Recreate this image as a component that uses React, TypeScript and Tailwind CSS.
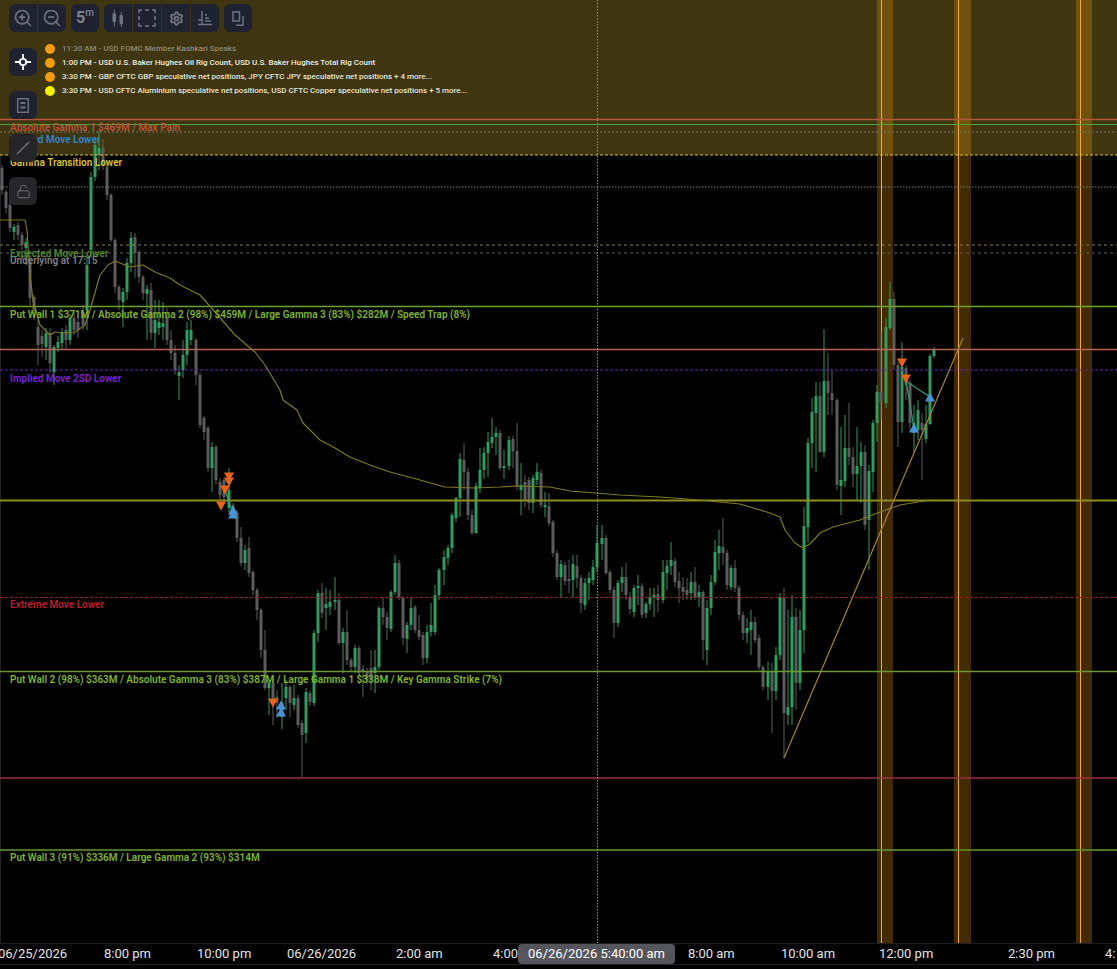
import React from 'react';
import { ZoomIn, ZoomOut, Settings, LockOpen } from 'lucide-react';

// x, wick top, body top, body bottom, wick bottom, green?
const CANDLES: number[][] = [
  [2,165,168,190,195,0],[6,190,192,208,213,0],[10,200,205,228,232,0],[14,224,227,232,240,1],[18,222,225,235,240,0],[22,232,235,245,250,0],[26,238,242,248,265,1],[30,258,262,298,305,0],
  [34,295,297,310,320,0],[38,317,327,345,365,0],[42,330,336,344,357,0],[46,328,333,347,360,1],[50,328,333,363,372,0],[54,345,347,372,385,1],[58,336,342,348,352,1],[62,328,332,343,350,1],
  [66,325,330,340,350,0],[70,314,318,340,345,1],[74,312,318,330,335,0],[78,318,322,330,338,0],[83,305,312,325,330,0],[87,255,265,310,330,1],[91,172,177,250,258,1],[95,140,145,177,181,1],
  [99,131,148,155,170,1],[103,139,148,165,170,0],[107,160,167,195,200,0],[111,193,195,240,242,0],[115,238,240,287,293,0],[119,285,287,300,310,0],[123,288,292,302,327,1],[127,258,263,292,300,1],
  [131,232,238,263,272,1],[135,233,237,253,278,0],[139,250,252,277,283,0],[143,275,277,293,300,0],[147,285,289,294,340,1],[151,283,290,333,340,0],[155,300,320,333,348,1],[159,300,322,328,335,1],
  [163,302,323,327,340,1],[167,308,317,340,345,0],[171,330,340,353,360,0],[175,345,353,370,375,0],[179,365,372,376,400,1],[183,340,355,370,378,1],[187,322,330,355,365,1],[191,320,330,340,345,1],
  [196,338,340,375,385,0],[200,372,375,425,428,0],[204,416,418,432,440,0],[208,426,428,468,472,0],[212,442,447,468,492,1],[216,445,447,480,484,0],[220,478,482,495,500,0],[224,478,480,497,500,0],
  [229,468,490,508,512,1],[233,503,505,515,518,0],[237,510,513,538,542,0],[241,527,538,563,566,0],[245,545,550,563,570,1],[249,537,548,573,577,0],[253,570,572,590,595,0],[257,588,590,610,620,0],
  [261,608,610,650,658,0],[265,630,650,688,690,0],[269,680,683,688,715,1],[273,675,683,700,725,0],[277,690,697,703,718,0],[282,683,703,717,729,1],[286,680,687,698,710,1],[290,685,687,703,717,0],
  [294,685,698,705,710,1],[298,695,698,725,728,0],[302,720,723,735,777,0],[306,688,692,733,743,1],[310,690,693,702,706,0],[314,630,633,703,706,1],[318,590,593,633,642,1],[322,583,593,613,618,0],
  [326,588,604,608,630,1],[330,590,602,607,615,1],[335,577,600,602,610,1],[339,593,600,643,645,0],[343,628,632,643,673,1],[347,610,632,660,665,0],[351,658,660,667,672,0],[355,645,648,667,673,1],
  [359,646,648,673,677,0],[363,665,669,672,697,0],[367,668,672,680,684,0],[371,650,668,680,690,0],[375,650,667,673,693,1],[379,606,608,667,670,1],[383,597,608,617,625,0],[387,612,617,628,640,0],
  [391,590,592,629,632,1],[395,555,563,592,595,1],[399,560,563,597,600,0],[403,596,598,638,645,0],[407,622,625,639,653,1],[411,597,608,625,630,1],[415,605,607,630,633,0],[419,615,630,637,640,0],
  [423,632,635,658,665,0],[427,625,632,658,663,1],[431,603,625,632,636,1],[435,585,595,632,635,1],[439,568,570,595,600,1],[444,550,557,570,585,1],[448,545,548,558,565,1],[452,513,515,548,553,1],
  [456,497,498,518,522,1],[460,453,459,498,517,1],[464,443,460,472,490,0],[468,468,472,515,520,0],[472,510,515,533,535,0],[476,483,486,533,534,1],[480,448,470,488,493,1],[484,447,453,470,479,1],
  [488,432,442,453,477,1],[492,418,437,443,448,1],[496,427,433,437,455,1],[500,430,433,468,470,0],[504,450,466,468,479,1],[509,436,440,466,470,1],[513,436,439,451,468,0],[517,423,451,486,490,0],
  [521,463,485,490,515,1],[525,475,482,500,507,0],[529,477,480,503,510,0],[533,475,478,503,513,1],[537,463,472,480,485,1],[541,470,473,505,508,0],[545,492,505,507,517,1],[549,493,506,523,526,0],
  [553,520,522,553,557,0],[557,550,553,577,580,0],[561,560,564,577,597,1],[565,562,565,581,585,0],[569,560,579,581,593,0],[573,555,564,580,597,1],[577,555,566,578,588,0],[581,575,578,603,613,0],
  [585,578,583,605,610,1],[589,572,578,583,600,1],[593,560,567,580,585,1],[597,525,543,567,572,1],[602,525,538,544,560,1],[606,535,538,573,575,0],[610,570,572,590,593,0],[614,587,590,623,638,0],
  [618,580,583,623,627,1],[622,567,577,583,592,1],[626,563,577,595,600,0],[630,592,597,609,614,0],[634,585,588,612,617,1],[638,575,586,588,605,1],[642,583,586,615,618,0],[646,602,604,613,618,1],
  [650,588,597,604,610,1],[654,588,595,597,617,1],[658,585,594,600,612,0],[663,560,572,600,603,1],[667,560,566,573,590,1],[671,542,560,566,575,1],[675,558,561,582,587,0],[679,572,581,588,603,0],
  [683,577,587,592,600,0],[687,578,590,595,600,0],[691,572,582,593,600,1],[695,567,582,597,600,0],[699,585,592,597,607,1],[703,590,592,640,660,0],[707,600,608,650,665,1],[711,575,582,608,615,1],
  [715,540,552,582,585,1],[719,530,546,553,570,1],[723,518,547,553,565,0],[727,550,553,585,590,0],[731,565,568,587,590,1],[735,560,568,588,592,0],[739,585,588,615,620,0],[743,612,615,633,640,0],
  [747,618,628,633,643,1],[751,610,622,630,655,1],[755,617,622,640,643,0],[759,635,638,667,670,0],[763,665,667,687,690,0],[768,662,672,687,700,1],[772,663,672,691,733,0],[776,647,655,691,700,1],
  [780,593,597,655,660,1],[784,588,598,713,758,0],[788,610,707,715,725,1],[792,595,617,707,725,1],[796,608,617,683,710,0],[800,610,630,683,690,1],[804,507,526,630,653,1],[808,438,443,527,543,1],
  [812,398,412,443,468,1],[816,382,396,413,472,1],[820,382,396,452,453,0],[824,329,381,452,457,1],[828,353,381,393,415,0],[832,370,393,400,415,0],[837,398,400,485,490,0],[841,427,480,486,515,1],
  [845,415,448,481,487,1],[849,403,448,457,465,0],[853,447,457,474,487,0],[857,427,466,474,500,1],[861,442,452,466,503,1],[865,445,452,525,530,0],[869,465,471,520,570,1],[873,420,423,472,492,1],
  [877,385,392,423,442,1],[881,333,392,402,420,0],[886,318,327,403,408,1],[890,282,299,328,330,1],[894,292,299,365,370,0],[898,362,365,422,447,0],[902,342,367,422,433,1],[906,365,368,385,400,0],
  [910,380,383,423,430,0],[914,405,423,433,453,1],[918,400,410,430,440,1],[922,413,423,430,480,0],[926,405,424,439,443,1],[930,354,356,424,425,1],[934,347,349,356,358,1],
];

const AVERAGE =
  '0,220 25,220 27,230 30,275 33,300 40,325 50,335 55,332 62,333 75,332 85,325 90,310 100,275 108,265 115,261 125,265 130,267 143,265 155,272 170,278 180,285 190,290 200,295 215,312 235,335 255,352 265,365 280,390 ' +
  '283,400 297,410 303,423 320,440 335,448 350,457 370,465 390,472 420,480 445,487 475,488 500,487 515,486 550,487 570,491 620,495 660,497 700,500 740,504 770,513 780,517 785,530 795,543 803,548 810,544 820,533 833,527 860,520 880,512 900,505 930,500';

const LEVELS = [
  { y: 119.5, color: '#b5583c', w: 1.6 },
  { y: 124.5, color: '#4f9f3a', w: 1.2 },
  { y: 132, color: '#7a7a68', w: 1.2, dash: '2 2' },
  { y: 155, color: '#d6bf35', w: 1.2, dash: '3 2' },
  { y: 187, color: '#7d7d7d', w: 1.2, dash: '1.5 1.5' },
  { y: 245, color: '#8a7f50', w: 1, dash: '3 3' },
  { y: 253, color: '#5f5f5f', w: 1, dash: '3 3' },
  { y: 306.5, color: '#6ca42a', w: 1.5 },
  { y: 349.5, color: '#b5655a', w: 1.5 },
  { y: 370, color: '#6a24b8', w: 1.1, dash: '3 2' },
  { y: 500.5, color: '#8f8d20', w: 2 },
  { y: 597.5, color: '#a01c22', w: 1.2, dash: '3 2' },
  { y: 671.5, color: '#6b9a30', w: 1.5 },
  { y: 778, color: '#9a3040', w: 1.5 },
  { y: 850, color: '#5f9a2f', w: 1.5 },
];

const LABELS = [
  { y: 131, color: '#b8563c', text: 'Absolute Gamma 1 $469M / Max Pain' },
  { y: 143, color: '#2f86d0', text: 'Implied Move Lower' },
  { y: 166, color: '#dcc432', text: 'Gamma Transition Lower' },
  { y: 257, color: '#4f8a2a', text: 'Expected Move Lower' },
  { y: 264, color: '#808080', text: 'Underlying at 17:15' },
  { y: 317.5, color: '#7fb52a', text: 'Put Wall 1 $371M / Absolute Gamma 2 (98%) $459M / Large Gamma 3 (83%) $282M / Speed Trap (8%)' },
  { y: 381.5, color: '#7f22d8', text: 'Implied Move 2SD Lower' },
  { y: 608, color: '#c01c28', text: 'Extreme Move Lower' },
  { y: 682.5, color: '#7fb52a', text: 'Put Wall 2 (98%) $363M / Absolute Gamma 3 (83%) $387M / Large Gamma 1 $338M / Key Gamma Strike (7%)' },
  { y: 860.5, color: '#7fb52a', text: 'Put Wall 3 (91%) $336M / Large Gamma 2 (93%) $314M' },
];

const BANDS = [
  { x: 877, w: 16, line: 881.5 },
  { x: 954, w: 17, line: 958.5 },
  { x: 1076, w: 16, line: 1080.5 },
];

const DOWN = [[229, 477], [229, 482], [225, 490], [221, 506], [273, 703], [902, 363], [906, 379]];
const UP = [[233, 510], [233, 514], [281, 705], [281, 712], [914, 428], [930, 397]];

const EVENTS = [
  { dot: 'bg-[#f39c12]', text: 'text-[#8f8b78]', label: '11:30 AM - USD FOMC Member Kashkari Speaks' },
  { dot: 'bg-[#f39c12]', text: 'text-[#eeeee4]', label: '1:00 PM - USD U.S. Baker Hughes Oil Rig Count, USD U.S. Baker Hughes Total Rig Count' },
  { dot: 'bg-[#f39c12]', text: 'text-[#e6e6da]', label: '3:30 PM - GBP CFTC GBP speculative net positions, JPY CFTC JPY speculative net positions + 4 more...' },
  { dot: 'bg-[#f5f000]', text: 'text-[#e6e6da]', label: '3:30 PM - USD CFTC Aluminium speculative net positions, USD CFTC Copper speculative net positions + 5 more...' },
];

const TICKS = [
  { cls: 'left-[-2px]', label: '06/25/2026' },
  { cls: 'left-[104px]', label: '8:00 pm' },
  { cls: 'left-[197px]', label: '10:00 pm' },
  { cls: 'left-[287px]', label: '06/26/2026' },
  { cls: 'left-[396px]', label: '2:00 am' },
  { cls: 'left-[493px]', label: '4:00' },
  { cls: 'left-[688px]', label: '8:00 am' },
  { cls: 'left-[781px]', label: '10:00 am' },
  { cls: 'left-[879px]', label: '12:00 pm' },
  { cls: 'left-[1008px]', label: '2:30 pm' },
  { cls: 'left-[1105px]', label: '4:' },
];

const Btn = ({ children, className = '' }: { children: React.ReactNode; className?: string }) => (
  <div className={`flex h-7 w-7 items-center justify-center bg-[#1f2230] text-[#70737f] ${className}`}>{children}</div>
);

const Chart = () => (
  <svg width={1117} height={943} className="absolute inset-0">
    <rect x={0} y={0} width={1117} height={155} fill="#3f3510" />
    <line x1={0.5} y1={155} x2={0.5} y2={943} stroke="#222" />
    {BANDS.map((b) => (
      <g key={b.x}>
        <rect x={b.x} y={0} width={b.w} height={943} fill="#f59e0b" fillOpacity={0.27} />
        <line x1={b.line} y1={0} x2={b.line} y2={943} stroke="#f5a93a" strokeWidth={1} />
      </g>
    ))}
    {CANDLES.map(([x, hi, top, bot, lo, g]) => {
      const c = g ? '#2f9c60' : '#5c5c5e';
      return (
        <g key={x}>
          <line x1={x} y1={hi} x2={x} y2={lo} stroke={c} strokeWidth={1} />
          <rect x={x - 1.5} y={top} width={3} height={bot - top} fill={c} />
        </g>
      );
    })}
    {LEVELS.map((l) => (
      <line key={l.y} x1={0} y1={l.y} x2={1117} y2={l.y} stroke={l.color} strokeWidth={l.w} strokeDasharray={l.dash} />
    ))}
    <line x1={597.5} y1={0} x2={597.5} y2={943} stroke="#8a8a8a" strokeWidth={1} strokeDasharray="1.5 1.5" />
    <polyline points={AVERAGE} fill="none" stroke="#7f7a20" strokeWidth={1.2} strokeLinejoin="round" />
    <line x1={784} y1={758} x2={963} y2={338} stroke="#a8842a" strokeWidth={1.2} />
    <polyline points="225,490 233,514" fill="none" stroke="#3f9a70" strokeWidth={1.2} />
    <polyline points="914,428 906,381 930,397" fill="none" stroke="#3f9a70" strokeWidth={1.2} />
    {DOWN.map(([x, y]) => (
      <polygon key={`${x}-${y}`} points={`${x - 5},${y - 4.5} ${x + 5},${y - 4.5} ${x},${y + 4.5}`} fill="#e8641a" />
    ))}
    {UP.map(([x, y]) => (
      <polygon key={`${x}-${y}`} points={`${x - 5},${y + 4.5} ${x + 5},${y + 4.5} ${x},${y - 4.5}`} fill="#4a94d4" />
    ))}
    {LABELS.map((l) => (
      <text key={l.text} x={10} y={l.y} fill={l.color} className="text-[10px] font-semibold">
        {l.text}
      </text>
    ))}
  </svg>
);

export default function App() {
  return (
    <div className="flex h-[969px] w-[1117px] flex-col overflow-hidden bg-black font-[Roboto,sans-serif]">
      <div className="relative h-[943px] shrink-0">
        <Chart />

        {/* top toolbar */}
        <div className="absolute left-[9px] top-1 flex">
          <div className="flex gap-px">
            <Btn className="rounded-l-md"><ZoomIn size={20} /></Btn>
            <Btn className="rounded-r-md"><ZoomOut size={20} /></Btn>
          </div>
          <Btn className="ml-[5px] rounded-md">
            <span className="flex items-start text-[16px] font-bold leading-none text-[#7f828e]">5<span className="mt-[-2px] text-[10px] font-medium leading-none">m</span></span>
          </Btn>
          <div className="ml-[5px] flex gap-px">
            <Btn className="rounded-l-md">
              <svg width={16} height={20} viewBox="0 0 16 20" fill="currentColor">
                <rect x={2.5} y={5} width={3.5} height={9} rx={1} />
                <rect x={3.8} y={1.5} width={1} height={17} />
                <rect x={9.5} y={7} width={3.5} height={9} rx={1} />
                <rect x={10.8} y={4} width={1} height={15} />
              </svg>
            </Btn>
            <Btn>
              <svg width={18} height={18} viewBox="0 0 18 18" fill="none" stroke="currentColor" strokeWidth={1.6}>
                <path d="M1 4V1h3M7 1h4M14 1h3v3M17 7v4M17 14v3h-3M11 17H7M4 17H1v-3M1 11V7" />
              </svg>
            </Btn>
            <Btn><Settings size={15} strokeWidth={3} /></Btn>
            <Btn className="rounded-r-md">
              <svg width={16} height={16} viewBox="0 0 16 16" fill="none" stroke="currentColor" strokeWidth={1.4}>
                <path d="M5 1v13M1 14.5h14M1 10h4M8 5h2M8 8h4M8 11h6" />
              </svg>
            </Btn>
          </div>
          <Btn className="ml-[5px] rounded-md">
            <svg width={12} height={15} viewBox="0 0 12 15" fill="none" stroke="currentColor" strokeWidth={1.5}>
              <rect x={1} y={1} width={6.5} height={9} />
              <path d="M11 5v9.2H4" />
            </svg>
          </Btn>
        </div>

        {/* left tools */}
        <div className="absolute left-[9px] top-[48px] flex flex-col gap-[15px]">
          <Btn className="rounded-md !text-white">
            <svg width={16} height={16} viewBox="0 0 16 16" fill="none" stroke="currentColor" strokeWidth={1.8}>
              <circle cx={8} cy={8} r={3.2} />
              <path d="M8 0v4.5M8 11.5V16M0 8h4.5M11.5 8H16" />
            </svg>
          </Btn>
          <Btn className="rounded-md">
            <svg width={12} height={15} viewBox="0 0 12 15" fill="none" stroke="currentColor" strokeWidth={1.4}>
              <rect x={0.7} y={0.7} width={10.6} height={13.6} />
              <path d="M3.5 5h5M3.5 9.5h5" strokeWidth={1.8} />
            </svg>
          </Btn>
          <Btn className="rounded-md !bg-[#262628]">
            <svg width={14} height={14} viewBox="0 0 14 14" fill="none" stroke="currentColor" strokeWidth={1.5}>
              <path d="M1 13 13 1" />
            </svg>
          </Btn>
          <Btn className="rounded-md !bg-[#262628]">
            <LockOpen size={15} strokeWidth={1.5} />
          </Btn>
        </div>

        {/* economic events */}
        <div className="absolute left-[45px] top-[42px] flex flex-col">
          {EVENTS.map((e) => (
            <div key={e.label} className="flex h-[14px] items-center gap-[7px]">
              <span className={`h-[10px] w-[10px] rounded-full ${e.dot}`} />
              <span className={`whitespace-nowrap text-[8px] font-medium ${e.text}`}>{e.label}</span>
            </div>
          ))}
        </div>
      </div>

      {/* time axis */}
      <div className="relative h-[22px] shrink-0 border-y border-[#222] text-[13px] leading-[20px] text-[#e4e4e4]">
        {TICKS.map((t) => (
          <span key={t.label} className={`absolute top-0 whitespace-nowrap ${t.cls}`}>{t.label}</span>
        ))}
        <span className="absolute left-[518px] top-0 flex h-[20px] w-[157px] items-center justify-center rounded bg-[#55565c] text-white">
          06/26/2026 5:40:00 am
        </span>
      </div>
    </div>
  );
}
